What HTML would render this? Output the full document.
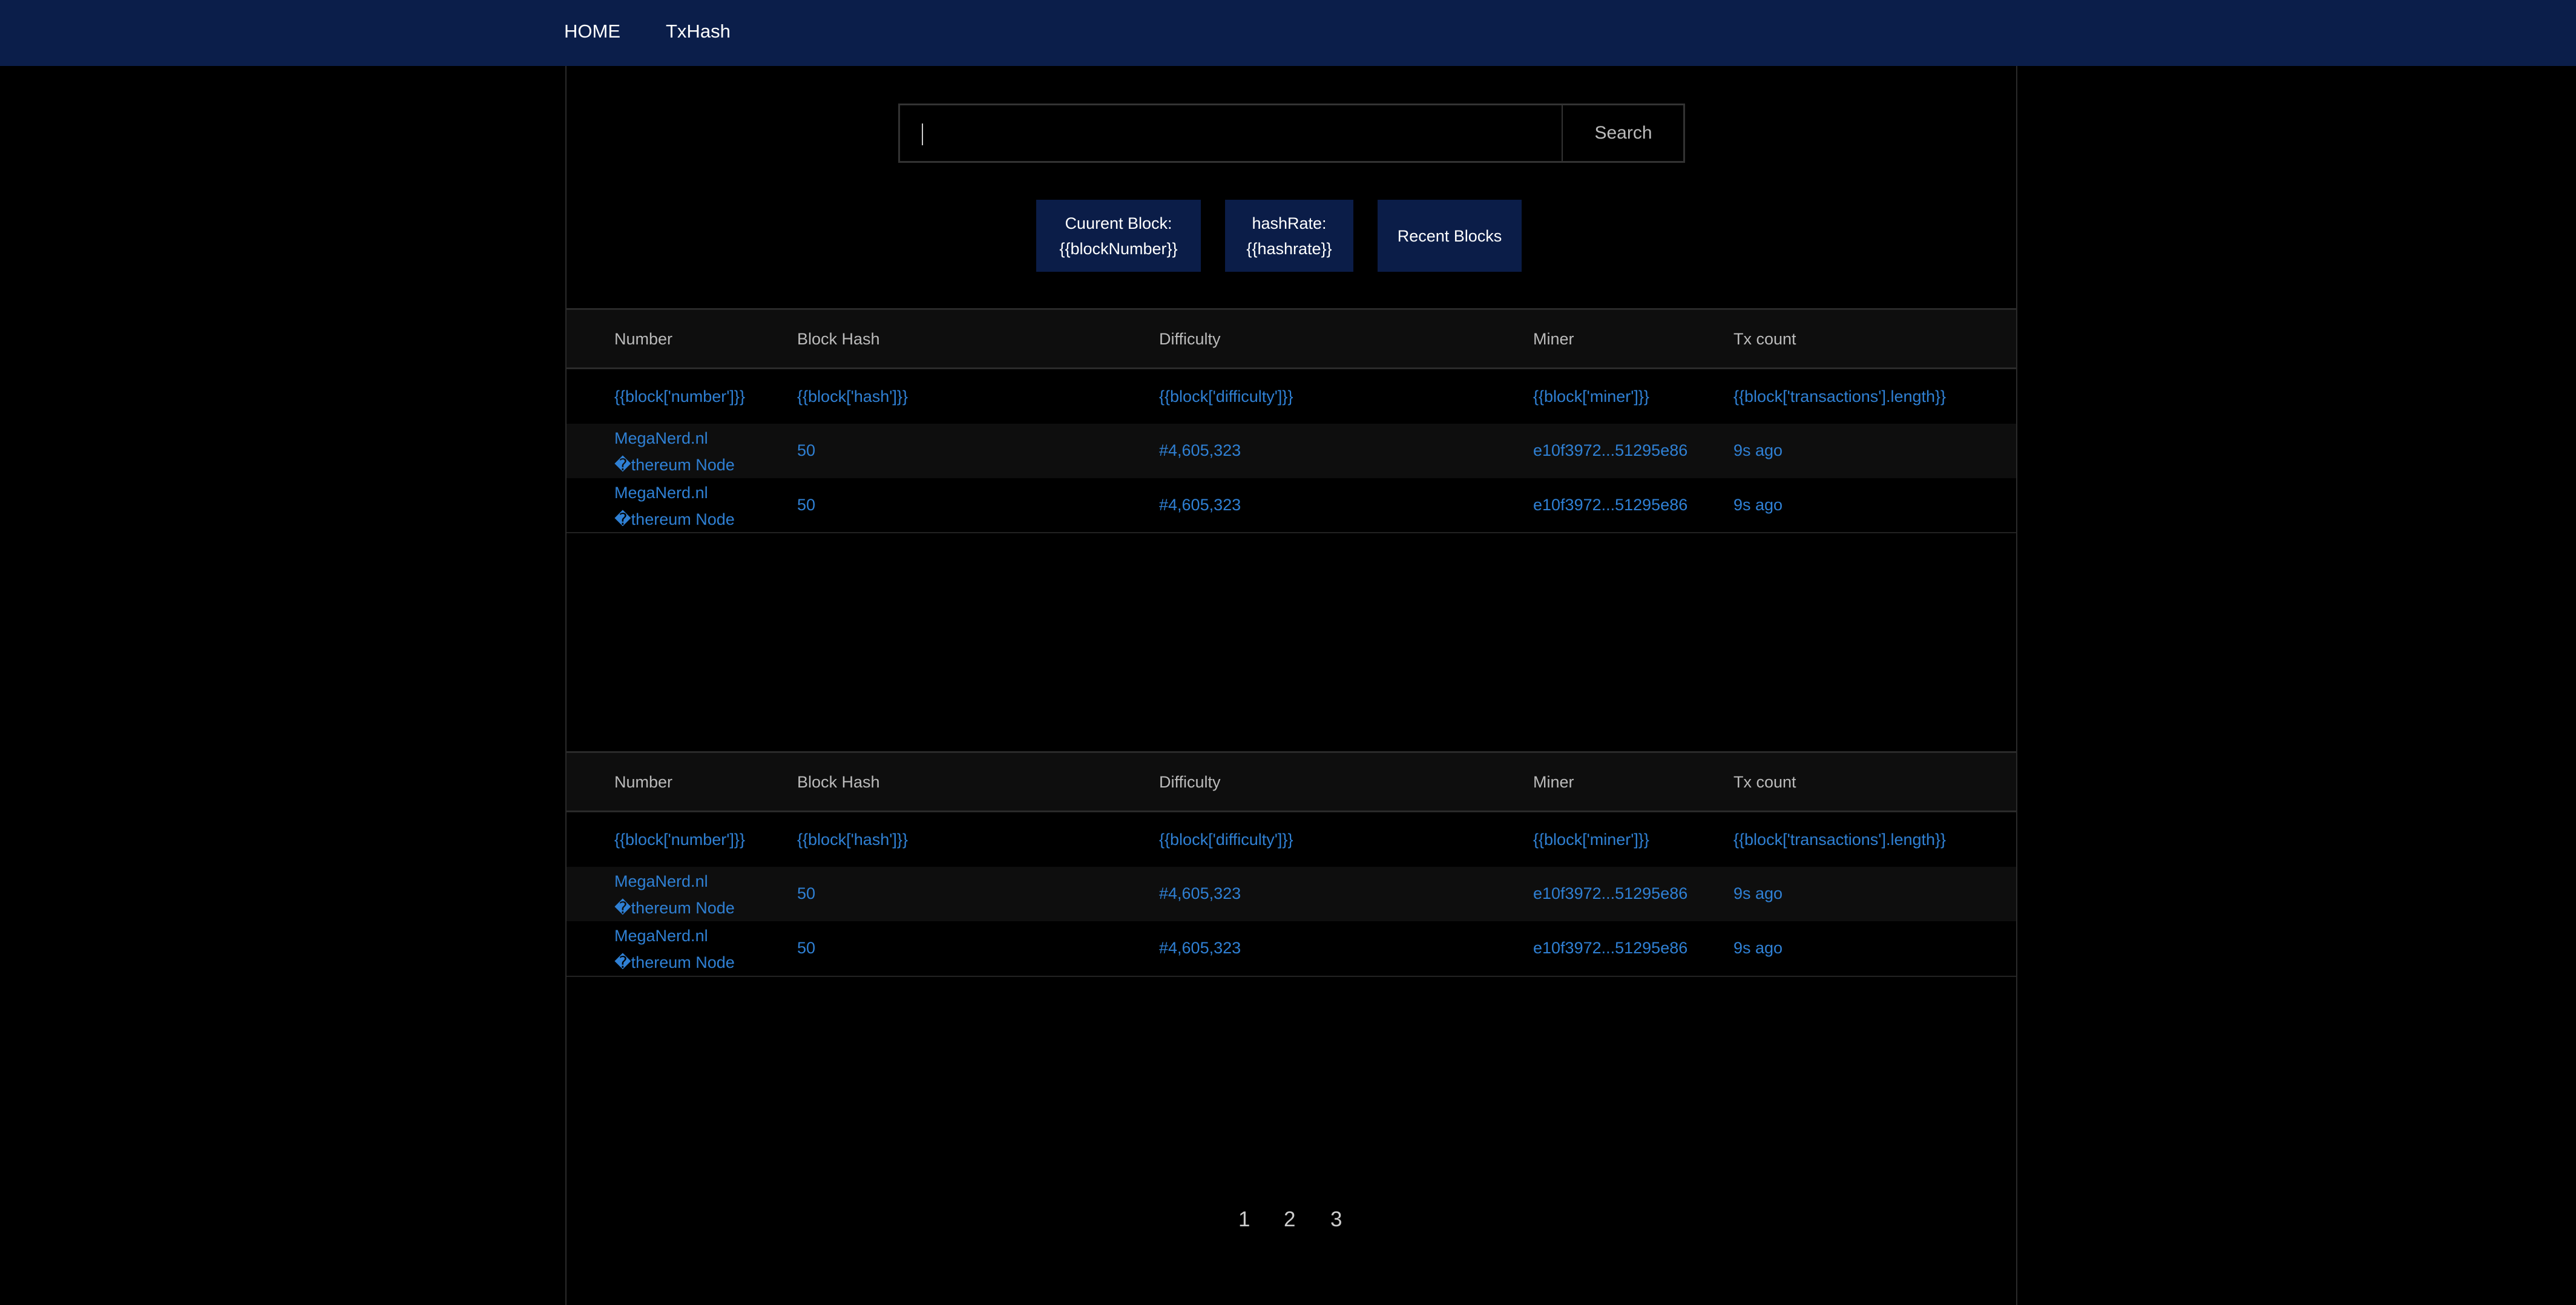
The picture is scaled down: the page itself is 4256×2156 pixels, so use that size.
<!DOCTYPE html>
<html><head><meta charset="utf-8"><style>
*{margin:0;padding:0;box-sizing:border-box}
body{width:4256px;height:2156px;background:#000;font-family:"Liberation Sans",sans-serif;position:relative;overflow:hidden}
.nav{position:absolute;left:0;top:0;width:4256px;height:109px;background:#0b1e4a}
.nav span{position:absolute;top:36px;color:#fff;font-size:31px;line-height:31px}
.cont{position:absolute;left:934px;top:109px;width:2399px;height:2047px;border-left:2px solid #2a2a2a;border-right:2px solid #2a2a2a}
.search{position:absolute;left:1484px;top:171px;width:1300px;height:98px;border:3px solid #333}
.search .cur{position:absolute;left:36px;top:30px;width:2px;height:36px;background:#ccc}
.search .div{position:absolute;left:1093px;top:0;width:2px;height:92px;background:#333}
.search .btn{position:absolute;left:1095px;top:0;width:200px;height:92px;color:#bbb;font-size:30px;line-height:92px;text-align:center}
.b{position:absolute;top:330px;height:119px;background:#0b1d48;color:#fff;font-size:27px;line-height:42px;text-align:center;display:flex;align-items:center;justify-content:center}
.tbl{position:absolute;left:936px;width:2395px}
.hd{position:absolute;left:0;width:2395px;height:101px;background:#0e0e0e;border-top:3px solid #2a2a2a;border-bottom:3px solid #2a2a2a}
.row{position:absolute;left:0;width:2395px;height:90px}
.c{position:absolute;font-size:27px;white-space:nowrap}
.hd .c{color:#bbb;top:33px}
.row .c{color:#2f80d4}
.line{position:absolute;left:0;width:2395px;height:2px;background:#222}
.pg{position:absolute;top:1995px;color:#ccc;font-size:35px}
</style></head><body>
<div class="nav"><span style="left:932px">HOME</span><span style="left:1100px">TxHash</span></div>
<div class="cont"></div>
<div class="search"><div class="cur"></div><div class="div"></div><div class="btn">Search</div></div>
<div class="b" style="left:1712px;width:272px">Cuurent Block:<br>{{blockNumber}}</div>
<div class="b" style="left:2024px;width:212px">hashRate:<br>{{hashrate}}</div>
<div class="b" style="left:2276px;width:238px">Recent Blocks</div>

<div class="tbl" style="top:509px">
 <div class="hd" style="top:0"><span class="c" style="left:79px">Number</span><span class="c" style="left:381px">Block Hash</span><span class="c" style="left:979px">Difficulty</span><span class="c" style="left:1597px">Miner</span><span class="c" style="left:1928px">Tx count</span></div>
 <div class="row" style="top:102px"><span class="c" style="left:79px;top:29px">{{block['number']}}</span><span class="c" style="left:381px;top:29px">{{block['hash']}}</span><span class="c" style="left:979px;top:29px">{{block['difficulty']}}</span><span class="c" style="left:1597px;top:29px">{{block['miner']}}</span><span class="c" style="left:1928px;top:29px">{{block['transactions'].length}}</span></div>
 <div class="row" style="top:191px;background:#0e0e0e"><span class="c" style="left:79px;top:2px;line-height:44px">MegaNerd.nl<br>�thereum Node</span><span class="c" style="left:381px;top:29px">50</span><span class="c" style="left:979px;top:29px">#4,605,323</span><span class="c" style="left:1597px;top:29px">e10f3972...51295e86</span><span class="c" style="left:1928px;top:29px">9s ago</span></div>
 <div class="row" style="top:281px"><span class="c" style="left:79px;top:2px;line-height:44px">MegaNerd.nl<br>�thereum Node</span><span class="c" style="left:381px;top:29px">50</span><span class="c" style="left:979px;top:29px">#4,605,323</span><span class="c" style="left:1597px;top:29px">e10f3972...51295e86</span><span class="c" style="left:1928px;top:29px">9s ago</span></div>
 <div class="line" style="top:370px"></div>
</div>

<div class="tbl" style="top:1241px">
 <div class="hd" style="top:0"><span class="c" style="left:79px">Number</span><span class="c" style="left:381px">Block Hash</span><span class="c" style="left:979px">Difficulty</span><span class="c" style="left:1597px">Miner</span><span class="c" style="left:1928px">Tx count</span></div>
 <div class="row" style="top:102px"><span class="c" style="left:79px;top:29px">{{block['number']}}</span><span class="c" style="left:381px;top:29px">{{block['hash']}}</span><span class="c" style="left:979px;top:29px">{{block['difficulty']}}</span><span class="c" style="left:1597px;top:29px">{{block['miner']}}</span><span class="c" style="left:1928px;top:29px">{{block['transactions'].length}}</span></div>
 <div class="row" style="top:191px;background:#0e0e0e"><span class="c" style="left:79px;top:2px;line-height:44px">MegaNerd.nl<br>�thereum Node</span><span class="c" style="left:381px;top:29px">50</span><span class="c" style="left:979px;top:29px">#4,605,323</span><span class="c" style="left:1597px;top:29px">e10f3972...51295e86</span><span class="c" style="left:1928px;top:29px">9s ago</span></div>
 <div class="row" style="top:281px"><span class="c" style="left:79px;top:2px;line-height:44px">MegaNerd.nl<br>�thereum Node</span><span class="c" style="left:381px;top:29px">50</span><span class="c" style="left:979px;top:29px">#4,605,323</span><span class="c" style="left:1597px;top:29px">e10f3972...51295e86</span><span class="c" style="left:1928px;top:29px">9s ago</span></div>
 <div class="line" style="top:371px"></div>
</div>

<span class="pg" style="left:2046px">1</span>
<span class="pg" style="left:2121px">2</span>
<span class="pg" style="left:2198px">3</span>
</body></html>
